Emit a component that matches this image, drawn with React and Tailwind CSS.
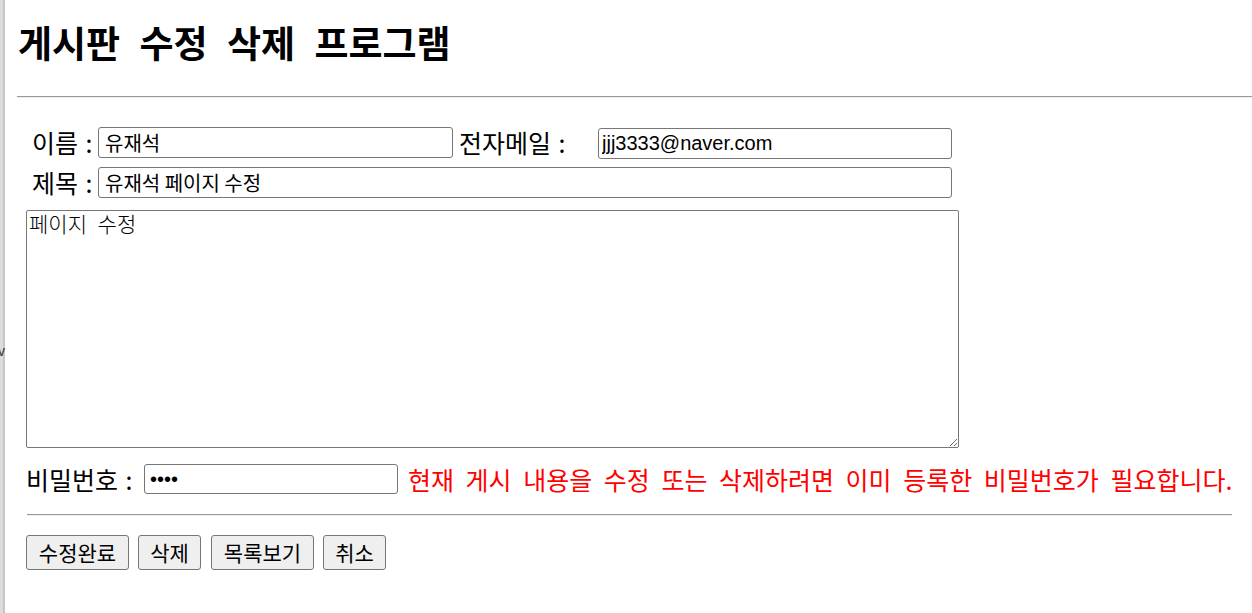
import React, { useState } from "react";

const App = () => {
  const [board, setBoard] = useState({
    name: "유재석",
    email: "jjj3333@naver.com",
    title: "유재석 페이지 수정",
    content: "페이지 수정",
    pass: "1234",
  });

  const handleInputChange = (e) => {
    const { name, value } = e.target;
    setBoard((prev) => ({ ...prev, [name]: value }));
  };

  return (
    <div className="relative flex min-h-screen bg-white text-black font-['Noto_Sans_CJK_KR',sans-serif]">
      {/* left frame edge */}
      <div className="flex shrink-0">
        <div className="w-[3px] bg-[#dcdcdc]"></div>
        <div className="w-[2px] bg-[#c6c6c6]"></div>
      </div>
      <span className="absolute left-[-2px] top-[344px] text-[14px] leading-none text-[#333] font-['Liberation_Sans',sans-serif]">
        v
      </span>

      <div className="flex-1 min-w-0 overflow-hidden">
        <h1 className="mt-[23px] ml-[13px] text-[37px] font-bold leading-[38px] [word-spacing:11px] whitespace-nowrap">
          게시판 수정 삭제 프로그램
        </h1>
        <hr className="mt-[35px] ml-[12px] border-t border-b border-t-[#9a9a9a] border-b-[#eeeeee]" />

        <form className="ml-[21px] mt-[29px]" onSubmit={(e) => e.preventDefault()}>
          {/* 이름 / 전자메일 */}
          <div className="flex items-center">
            <label className="w-[72px] pl-[6px] text-[25px] leading-none whitespace-nowrap [word-spacing:2px]">
              이름 :
            </label>
            <input
              type="text"
              name="name"
              value={board.name}
              onChange={handleInputChange}
              className="w-[355px] h-[31px] border border-[#767676] rounded-[3px] px-[6px] text-[20px] outline-none"
            />
            <label className="w-[145px] pl-[6px] text-[25px] leading-none whitespace-nowrap [word-spacing:2px]">
              전자메일 :
            </label>
            <input
              type="text"
              name="email"
              value={board.email}
              onChange={handleInputChange}
              className="translate-y-[1px] w-[354px] h-[31px] border border-[#767676] rounded-[3px] px-[3px] text-[20px] font-['Liberation_Sans',sans-serif] outline-none"
            />
          </div>

          {/* 제목 */}
          <div className="mt-[9px] flex items-center">
            <label className="w-[72px] pl-[6px] text-[25px] leading-none whitespace-nowrap [word-spacing:2px]">
              제목 :
            </label>
            <input
              type="text"
              name="title"
              value={board.title}
              onChange={handleInputChange}
              className="w-[854px] h-[31px] border border-[#767676] rounded-[3px] px-[6px] text-[20px] outline-none"
            />
          </div>

          {/* 내용 */}
          <textarea
            name="content"
            value={board.content}
            onChange={handleInputChange}
            className="mt-[12px] block w-[933px] h-[238px] border border-[#767676] rounded-[2px] px-[2px] pt-0 text-[21px] leading-[24px] text-black font-light [word-spacing:6px] resize outline-none"
          ></textarea>

          {/* 비밀번호 */}
          <div className="mt-[16px] flex items-center">
            <label className="w-[118px] text-[25px] leading-none whitespace-nowrap [word-spacing:2px]">
              비밀번호 :
            </label>
            <input
              type="password"
              name="pass"
              value={board.pass}
              onChange={handleInputChange}
              className="w-[254px] h-[30px] border border-[#767676] rounded-[3px] px-[5px] text-[20px] font-['Liberation_Sans',sans-serif] outline-none"
            />
            <span className="ml-[10px] text-[25px] leading-none text-[#ff0000] whitespace-nowrap [word-spacing:6px]">
              현재 게시 내용을 수정 또는 삭제하려면 이미 등록한 비밀번호가 필요합니다.
            </span>
          </div>

          <hr className="mt-[20px] ml-[1px] w-[1205px] border-t border-b border-t-[#9a9a9a] border-b-[#eeeeee]" />

          {/* 버튼 */}
          <div className="mt-[19px] flex gap-[9px]">
            <button type="submit" className="w-[103px] h-[35px] bg-[#efefef] border border-[#767676] rounded-[3px] text-[21px] leading-none">
              수정완료
            </button>
            <button type="button" className="w-[63px] h-[35px] bg-[#efefef] border border-[#767676] rounded-[3px] text-[21px] leading-none">
              삭제
            </button>
            <button type="button" className="ml-[1px] w-[103px] h-[35px] bg-[#efefef] border border-[#767676] rounded-[3px] text-[21px] leading-none">
              목록보기
            </button>
            <button type="reset" className="w-[63px] h-[35px] bg-[#efefef] border border-[#767676] rounded-[3px] text-[21px] leading-none">
              취소
            </button>
          </div>
        </form>
      </div>
    </div>
  );
};

export default App;
